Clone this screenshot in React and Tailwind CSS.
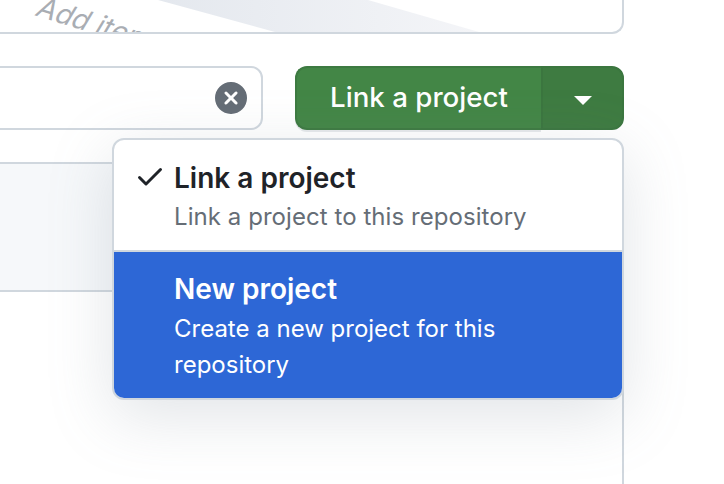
import React from "react";

const font = { fontFamily: "Inter, 'Liberation Sans', sans-serif" };

function Illustration() {
  return (
    <div className="relative h-[34px] w-[624px] overflow-hidden rounded-br-[12px] border-r-2 border-b-2 border-[#d0d7de] bg-white">
      <svg className="absolute top-0 left-0" width="622" height="32" viewBox="0 0 622 32">
        <defs>
          <linearGradient id="w" x1="0" x2="1" y1="0" y2="0">
            <stop offset="0" stopColor="#e4e8ee" />
            <stop offset="1" stopColor="#f4f5f8" />
          </linearGradient>
        </defs>
        <polygon points="158,0 275,32 479,32 368,0" fill="url(#w)" />
      </svg>
      <span className="absolute -top-[7px] left-[47px] origin-top-left rotate-[17deg] -skew-x-[14deg] text-[28px] leading-[30px] whitespace-nowrap text-[#a9adb3]">
        Add item
      </span>
    </div>
  );
}

function SearchBox() {
  return (
    <div className="-ml-[40px] flex h-[64px] w-[303px] items-center justify-end rounded-[12px] border-2 border-[#d0d7de] bg-white pr-[14px]">
      <svg width="32" height="32" viewBox="0 0 16 16" fill="#656d76">
        <path d="M2.343 13.657A8 8 0 1 1 13.658 2.343 8 8 0 0 1 2.343 13.657ZM6.03 4.97a.751.751 0 0 0-1.042.018.751.751 0 0 0-.018 1.042L6.94 8 4.97 9.97a.749.749 0 0 0 .326 1.275.749.749 0 0 0 .734-.215L8 9.06l1.97 1.97a.749.749 0 0 0 1.275-.326.749.749 0 0 0-.215-.734L9.06 8l1.97-1.97a.749.749 0 0 0-.326-1.275.749.749 0 0 0-.734.215L8 6.94Z" />
      </svg>
    </div>
  );
}

function SplitButton() {
  return (
    <div className="flex h-[64px] w-[329px] text-white">
      <div className="flex h-[64px] w-[246px] items-center justify-center rounded-l-[12px] border-2 border-r-0 border-[#3d7a41] bg-[#438646] text-[27.7px] font-medium shadow-[0_2px_0_#e7e9ec]">
        Link a project
      </div>
      <div className="flex h-[64px] w-[83px] items-center justify-center rounded-r-[12px] border-2 border-[#3b763f] bg-[#3e7b41]">
        <svg width="18" height="9" viewBox="0 0 18 9" className="mt-[4px]">
          <polygon points="0,0 18,0 9,9" fill="#ffffff" />
        </svg>
      </div>
    </div>
  );
}

function Menu() {
  return (
    <div className="absolute top-[72px] left-[112px] w-[512px] overflow-hidden rounded-[12px] border-2 border-[#d0d7de] bg-white shadow-[0_16px_64px_rgba(120,130,145,0.22)]">
      <div className="flex h-[112px] flex-col border-b-2 border-[#d0d7de] pt-[22px] pl-[60px]">
        <div className="relative text-[28px] leading-[32px] font-semibold text-[#1f2328]">
          <svg
            className="absolute -top-[2px] -left-[40px]"
            width="32"
            height="32"
            viewBox="0 0 16 16"
            fill="#1f2328"
          >
            <path d="M13.78 4.22a.75.75 0 0 1 0 1.06l-7.25 7.25a.75.75 0 0 1-1.06 0L2.22 9.28a.751.751 0 0 1 .018-1.042.751.751 0 0 1 1.042-.018L6 10.94l6.72-6.72a.75.75 0 0 1 1.06 0Z" />
          </svg>
          Link a project
        </div>
        <div className="mt-[5px] text-[24px] leading-[36px] tracking-[0.06px] text-[#656d76]">
          Link a project to this repository
        </div>
      </div>
      <div className="h-[146px] bg-[#2d67d6] pt-[21px] pr-[60px] pl-[60px] text-white">
        <div className="text-[28px] leading-[32px] font-semibold">New project</div>
        <div className="mt-[6px] text-[24px] leading-[36px]">
          Create a new project for this repository
        </div>
      </div>
    </div>
  );
}

export default function App() {
  return (
    <div className="h-[484px] w-[724px] overflow-hidden bg-white" style={font}>
      <Illustration />
      <div className="relative">
        <div className="mt-[32px] flex w-[624px] items-start justify-between">
          <SearchBox />
          <SplitButton />
        </div>
        <Menu />
      </div>
      <div className="mt-[32px] h-[322px] w-[624px] border-r-2 border-[#d0d7de] bg-white">
        <div className="h-[130px] border-y-2 border-[#d0d7de] bg-[#f6f8fa]" />
      </div>
    </div>
  );
}
